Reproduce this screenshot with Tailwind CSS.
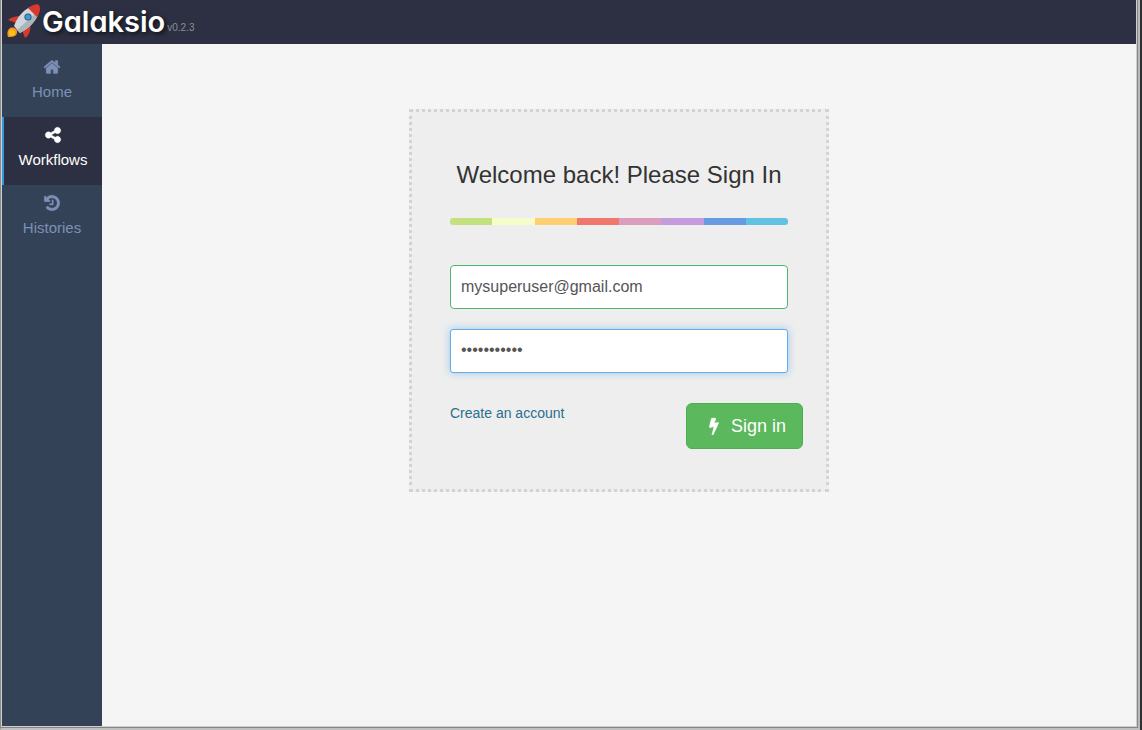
<!DOCTYPE html>
<html lang="en">
<head>
<meta charset="utf-8">
<title>Galaksio - Sign In</title>
<script src="https://cdn.jsdelivr.net/npm/@tailwindcss/browser@4"></script>
</head>
<body class="h-screen overflow-hidden bg-[#2d3035] pr-0.5 font-['Liberation_Sans',Arial,sans-serif] text-[#333333]">
<div class="h-full border-l border-[#8c8c8c] border-r-2 border-b-2 border-r-[#b9b9b9] border-b-[#c0c0c0]">
<div class="h-full border-r border-b border-[#858585]">
<div class="flex h-full flex-col border-x border-b border-[#cfcfcf] bg-[#f5f5f5]">
  <header class="flex h-11 shrink-0 items-center bg-[#2c3042] pl-1">
    <svg class="h-9 w-9" viewBox="0 0 36 36" aria-hidden="true">
      <path fill="#d8392d" d="M15 12 C10 12 5 13 2 16 L10 19Z M24 20 C25 25 24 31 19 34 L16 26Z"/>
      <path fill="#c62f27" d="M10 22l4 4-5 2z"/>
      <path fill="#cfd6dc" d="M8 22 C11 14 16 7 24 3 L32 11 C29 18 22 25 14 29Z"/>
      <path fill="#aab5bd" d="M11 26 L31 8 L32 11 C29 18 22 25 14 29Z"/>
      <path fill="#d8392d" d="M22 4 C26 1 32 -1 33 1 C35 4 34 9 31 13Z"/>
      <circle cx="22" cy="13" r="3.6" fill="#36566f"/><circle cx="22" cy="13" r="2.6" fill="#3d9be0"/>
      <path fill="#f29a1f" d="M3 25 C6 22 11 24 11 28 C11 32 8 33 2 33 C1 30 1 27 3 25Z"/>
      <circle cx="6" cy="29" r="3" fill="#fcc21b"/>
    </svg>
    <span class="text-[29px] leading-9 font-semibold text-white [font-family:Inter,sans-serif] [font-feature-settings:'cv11'] [text-shadow:2px_2px_4px_#000000b0]">Galaksio</span>
    <span class="ml-0.5 pt-3 text-[10px] leading-3 text-[#8b8e96]">v0.2.3</span>
  </header>
  <div class="flex min-h-0 flex-1">
    <nav class="w-[100px] shrink-0 bg-[#344257] pt-[5px] text-center text-[15px] leading-5 text-[#7d90b5]">
      <a href="#" class="flex h-[68px] flex-col items-center gap-[6px] pt-[9px]">
        <svg class="h-[18px] w-[18px]" viewBox="0 0 1792 1792" fill="currentColor" stroke="currentColor" stroke-width="40" aria-hidden="true"><path d="M1472 992v480q0 26-19 45t-45 19h-384v-384h-256v384h-384q-26 0-45-19t-19-45v-480q0-1 .5-3t.5-3l575-474 575 474q1 2 1 6zm223-69l-62 74q-8 9-21 11h-3q-13 0-21-7l-692-577-692 577q-12 8-24 7-13-2-21-11l-62-74q-8-10-7-23.5t11-21.5l719-599q32-26 76-26t76 26l244 204v-195q0-14 9-23t23-9h192q14 0 23 9t9 23v408l219 182q10 8 11 21.5t-7 23.5z"/></svg>
        <span>Home</span>
      </a>
      <a href="#" aria-current="page" class="flex h-[68px] flex-col items-center gap-[6px] border-l-2 border-[#3498db] bg-[#2c3042] pt-[9px] text-white">
        <svg class="h-[18px] w-[18px]" viewBox="0 0 1792 1792" fill="currentColor" stroke="currentColor" stroke-width="40" aria-hidden="true"><path d="M1344 1024q133 0 226.500 93.500t93.500 226.500-93.500 226.500-226.500 93.500-226.500-93.500-93.500-226.500q0-12 2-34l-360-180q-92 86-218 86-133 0-226.500-93.500t-93.500-226.500 93.500-226.500 226.500-93.500q126 0 218 86l360-180q-2-22-2-34 0-133 93.500-226.500t226.500-93.500 226.500 93.500 93.500 226.500-93.500 226.500-226.500 93.500q-126 0-218-86l-360 180q2 22 2 34t-2 34l360 180q92-86 218-86z"/></svg>
        <span>Workflows</span>
      </a>
      <a href="#" class="flex h-[68px] flex-col items-center gap-[6px] pt-[9px]">
        <svg class="h-[18px] w-[18px]" viewBox="0 0 1792 1792" fill="currentColor" stroke="currentColor" stroke-width="40" aria-hidden="true"><path d="M1664 896q0 156-61 298t-164 245-245 164-298 61q-172 0-327-72.500t-264-204.500q-7-10-6.500-22.500t8.500-20.500l137-138q10-9 25-9 16 2 23 12 73 95 179 147t225 52q104 0 198.500-40.500t163.500-109.500 109.500-163.500 40.500-198.500-40.500-198.500-109.500-163.500-163.500-109.500-198.500-40.500q-98 0-188 35.500t-160 101.500l137 138q31 30 14 69-17 40-59 40h-448q-26 0-45-19t-19-45v-448q0-42 40-59 39-17 69 14l130 129q107-101 244.500-156.500t284.500-55.500q156 0 298 61t245 164 164 245 61 298zm-640-288v448q0 14-9 23t-23 9h-320q-14 0-23-9t-9-23v-64q0-14 9-23t23-9h224v-352q0-14 9-23t23-9h64q14 0 23 9t9 23z"/></svg>
        <span>Histories</span>
      </a>
    </nav>
    <main class="flex-1 pt-[65px]">
      <form class="mx-auto w-full max-w-[420px] border-3 border-dotted border-[#d3d3d3] bg-[#eeeeee] px-[38px] pt-[47px] pb-10">
        <h1 class="text-center text-2xl leading-8 whitespace-nowrap">Welcome back! Please Sign In</h1>
        <div class="mt-[27px] flex h-[7px] overflow-hidden rounded-[3px]">
          <i class="flex-1 bg-[#c4e17f]"></i><i class="flex-1 bg-[#f7fdca]"></i><i class="flex-1 bg-[#fecf71]"></i><i class="flex-1 bg-[#f0776c]"></i><i class="flex-1 bg-[#db9dbe]"></i><i class="flex-1 bg-[#c49cde]"></i><i class="flex-1 bg-[#669ae1]"></i><i class="flex-1 bg-[#62c2e4]"></i>
        </div>
        <input type="email" aria-label="Email" value="mysuperuser@gmail.com" class="mt-10 block h-11 w-full rounded border border-[#4cb86e] bg-white px-[10px] text-base text-[#555555] outline-none">
        <input type="password" aria-label="Password" value="mysuperpass" class="mt-5 block h-11 w-full rounded-[3px] border border-[#5fadea] bg-white px-[10px] pb-0.5 text-base text-[#555555] shadow-[0_0_8px_#66afe999] outline-none">
        <div class="mt-[30px] -mr-[15px] flex items-start justify-between">
          <a href="#" class="text-sm leading-5 text-[#2a6f8f]">Create an account</a>
          <button type="submit" class="flex h-[46px] items-center gap-[6px] rounded-md border border-[#4cae4c] bg-[#5cb85c] px-4 text-lg leading-6 text-white">
            <svg class="h-[18px] w-[22px]" viewBox="0 0 1792 1792" fill="currentColor" stroke="currentColor" stroke-width="80" aria-hidden="true"><path d="M1333 566q18 20 7 44l-540 1157q-13 25-42 25-4 0-14-2-17-5-25.500-19t-4.500-30l197-808-406 101q-4 1-12 1-18 0-31-11-18-15-13-39l201-825q4-14 16-23t28-9h328q19 0 32 12.500t13 29.500q0 8-5 18l-171 463 396-98q8-2 12-2 19 0 34 15z"/></svg>
            Sign in
          </button>
        </div>
      </form>
    </main>
  </div>
</div>
</div>
</div>
</body>
</html>
